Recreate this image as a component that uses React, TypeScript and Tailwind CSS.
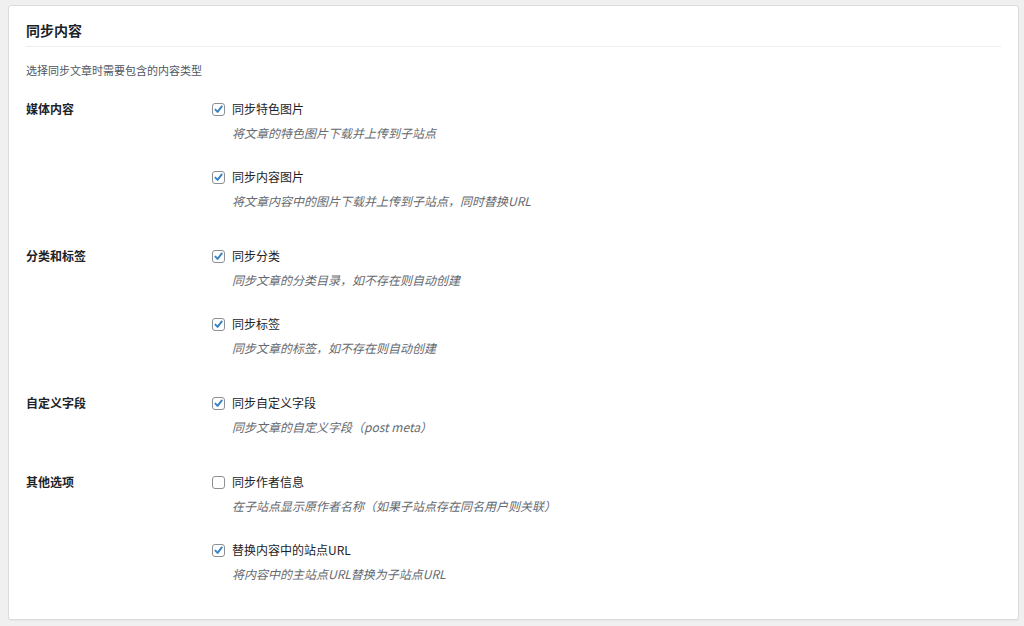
import React from "react";

type Item = { label: string; desc: string; checked: boolean };
type Group = { title: string; items: Item[] };

const groups: Group[] = [
  {
    title: "媒体内容",
    items: [
      { label: "同步特色图片", desc: "将文章的特色图片下载并上传到子站点", checked: true },
      { label: "同步内容图片", desc: "将文章内容中的图片下载并上传到子站点，同时替换URL", checked: true },
    ],
  },
  {
    title: "分类和标签",
    items: [
      { label: "同步分类", desc: "同步文章的分类目录，如不存在则自动创建", checked: true },
      { label: "同步标签", desc: "同步文章的标签，如不存在则自动创建", checked: true },
    ],
  },
  {
    title: "自定义字段",
    items: [
      { label: "同步自定义字段", desc: "同步文章的自定义字段（post meta）", checked: true },
    ],
  },
  {
    title: "其他选项",
    items: [
      { label: "同步作者信息", desc: "在子站点显示原作者名称（如果子站点存在同名用户则关联）", checked: false },
      { label: "替换内容中的站点URL", desc: "将内容中的主站点URL替换为子站点URL", checked: true },
    ],
  },
];

function Checkbox({ checked }: { checked: boolean }) {
  return (
    <span className="relative flex h-[13px] w-[13px] shrink-0 items-center justify-center rounded-[3px] border border-[#8c8f94] bg-white">
      {checked && (
        <svg viewBox="0 0 13 13" className="absolute left-[-1px] top-[-1px] h-[13px] w-[13px]">
          <path d="M3.4 6.6 L5.6 8.9 L9.8 3.4" fill="none" stroke="#3582c4" strokeWidth="1.9" strokeLinecap="round" strokeLinejoin="round" />
        </svg>
      )}
    </span>
  );
}

export default function App() {
  return (
    <div
      className="h-[626px] w-[1024px] bg-[#f0f0f1] pl-[8px] pt-[5px]"
      style={{ fontFamily: '"Noto Sans CJK SC", "Noto Sans", sans-serif' }}
    >
      <div className="h-[615px] w-[1011px] rounded-[3px] border border-[#dcdcde] bg-white px-[17px] pt-[14px] shadow-[0_1px_1px_rgba(0,0,0,0.04)]">
        <h2 className="border-b border-[#eeeeee] pb-[6px] text-[14px] font-bold leading-[20px] text-[#1d2327]">
          同步内容
        </h2>
        <p className="mt-[15px] text-[11px] leading-[16px] text-[#50575e]">选择同步文章时需要包含的内容类型</p>
        <div className="mt-[21px] flex flex-col gap-[37px]">
          {groups.map((g) => (
            <div key={g.title} className="flex">
              <div className="w-[186px] shrink-0 text-[12px] font-bold leading-[20px] text-[#1d2327]">{g.title}</div>
              <div className="flex flex-col gap-[26px]">
                {g.items.map((it) => (
                  <div key={it.label}>
                    <div className="flex h-[20px] items-center gap-[7px]">
                      <Checkbox checked={it.checked} />
                      <span className="text-[12px] leading-[20px] text-[#1d2327]">{it.label}</span>
                    </div>
                    <p className="ml-[20px] mt-[6px] text-[12px] italic leading-[16px] text-[#646970]">{it.desc}</p>
                  </div>
                ))}
              </div>
            </div>
          ))}
        </div>
      </div>
    </div>
  );
}
